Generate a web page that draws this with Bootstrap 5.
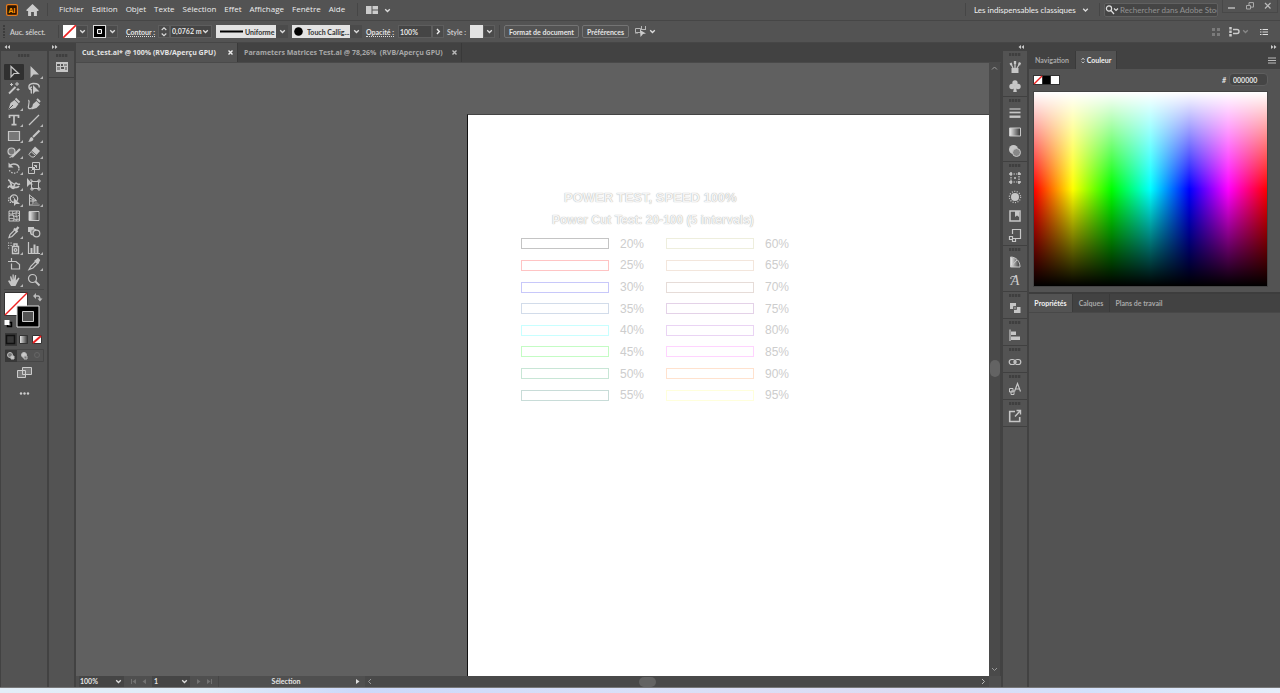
<!DOCTYPE html>
<html lang="fr">
<head>
<meta charset="utf-8">
<meta name="viewport" content="width=device-width, initial-scale=1">
<title>Cut_test.ai</title>
<link href="https://cdn.jsdelivr.net/npm/bootstrap@5.3.0/dist/css/bootstrap.min.css" rel="stylesheet">
<style>
:root{--bg:#535353;--dark:#424242;--line:#464646;--field:#454545;--ink:#e4e4e4;--dim:#a8a8a8;--icon:#c6c6c6;
--chev:url("data:image/svg+xml,%3Csvg xmlns='http://www.w3.org/2000/svg' width='11' height='13' viewBox='0 0 11 13'%3E%3Cpath d='M3.2 5.2 5.5 7.5 7.8 5.2' fill='none' stroke='%23ddd' stroke-width='1.3'/%3E%3C/svg%3E")}
body{font-family:"Open Sans","Noto Sans",sans-serif;font-size:7px;line-height:10px;font-weight:600;color:var(--ink);background:var(--bg)}
button,input,select{font:inherit;color:inherit;border:0;padding:0;margin:0;background:none;border-radius:0}
a{color:inherit;text-decoration:none}
svg{display:block;flex:none}
.ico{width:14px;height:14px;fill:none;stroke:var(--icon);stroke-width:1.2}
.ico .f{fill:var(--icon);stroke:none}
.chv{width:11px;height:13px;fill:none;stroke:#ddd;stroke-width:1.3}
.vsep{width:1px;background:var(--line);align-self:stretch;flex:none}
.ctlbar,.panels,.statusbar{font-family:Lato,"Open Sans",sans-serif;font-weight:700}
.menubar{height:21px;border-bottom:1px solid var(--line);font-size:8px;font-weight:400;color:#eee;padding-left:6px}
.menubar .vsep{margin:3px 0 4px}
.menulist{gap:8px;margin:0 12px 0 11px;padding-bottom:2px}
.pick{appearance:none;background:var(--chev) right center no-repeat}
.workspace{width:117px;font-family:Lato,sans-serif}
.searchbox{width:114px;height:14px;background:var(--field);border:1px solid #606060;border-radius:2px}
.searchbox input{font-family:Lato,sans-serif;font-size:8px;min-width:0;width:100%;outline:0}
.searchbox input::placeholder{color:#929292;opacity:1}
.winbtns{width:56px;height:13px;border:1px solid #484848;border-top:0;align-self:flex-start;margin-right:2px}
.ctlbar{height:22px;padding-left:3px;border-bottom:1px solid var(--line)}
.ctl{height:13px;flex:none}
.drop{width:12px;height:13px;border:1px solid #5e5e5e;background:#4b4b4b}
.drop .chv{margin:-1px 0}
.swatch{width:13px;height:13px;background:#fff;overflow:hidden}
.dotted{border-bottom:1px dotted #ddd;line-height:9px}
.fieldbox{background-color:var(--field);border:1px solid #5e5e5e;height:13px;line-height:11px}
.lightpick{height:13px;line-height:12px;color:#333;background-image:var(--chev),var(--mark),linear-gradient(90deg,#e2e2e2 60px,#4b4b4b 60px);background-repeat:no-repeat;background-position:right center,left center,0 0}
.strokepick{width:72px;padding-left:29px;--mark:url("data:image/svg+xml,%3Csvg xmlns='http://www.w3.org/2000/svg' width='30' height='13'%3E%3Cpath d='M4 6.5h23' stroke='%23000' stroke-width='2'/%3E%3C/svg%3E")}
.brushpick{width:70px;padding-left:15px;background-image:var(--chev),var(--mark),linear-gradient(90deg,#e2e2e2 58px,#4b4b4b 58px);--mark:url("data:image/svg+xml,%3Csvg xmlns='http://www.w3.org/2000/svg' width='15' height='13'%3E%3Ccircle cx='6.5' cy='6.5' r='4.3'/%3E%3C/svg%3E")}
.cbtn{height:13px;border:1px solid #747474;border-radius:2px;line-height:10px;white-space:nowrap;flex:none}
.railhead{height:8px;background:var(--dark);flex:none}
.rail{border-right:2px solid var(--dark);background:var(--bg)}
.grip{width:12px;height:3px;margin:3px auto 0;background:repeating-linear-gradient(90deg,#3f3f3f 0 2px,#4c4c4c 2px 3px)}
.toolgrid{display:grid;grid-template-columns:20px 20px;grid-auto-rows:16px;margin:7px 0 0 3px}
.toolgrid button{position:relative;display:grid;place-items:center}
.toolgrid .on{background:#303030;border-radius:1px}
.more::after{content:"";position:absolute;right:1px;bottom:1px;border-left:3px solid transparent;border-bottom:3px solid #b5b5b5}
.tabstrip{background:var(--dark)}
.doctab{height:19px;padding:0 4px 0 6px;border-right:1px solid #393939;color:var(--dim);font-weight:700}
.doctab.on{background:var(--bg);color:var(--ink)}
.canvas{background:#606060;overflow:hidden;position:relative}
.artboard{position:absolute;left:391px;top:51px;right:0;bottom:0;background:#fff;border-left:1px solid #111;border-top:1px solid #444;font-family:"Liberation Sans",Arial,sans-serif}
.sheet{width:268px;margin:76px 0 0 53px}
.sheet h1,.sheet h2{font-size:12px;line-height:14px;font-weight:700;margin:0 0 8px;white-space:nowrap;color:#f4f4f4;text-shadow:0 0 1px #999}
.sheet h1{margin-left:43px;font-size:13px}.sheet h2{margin-left:31px;margin-bottom:6px}
.swgrid{display:grid;grid-template-columns:88px 57px 88px 35px;grid-template-rows:repeat(8,1fr);height:173px;align-items:center;font-size:12px;line-height:14px;font-weight:400;color:#cdcdcd}
.pct{padding-left:11px}
.bar{height:11px;border:1px solid}
.scrollv{width:12px;background:#4a4a4a;border-right:1px solid var(--dark)}
.thumbv{width:10px;height:17px;border-radius:5px;background:#636363}
.statusbar{height:11px;background:#4f4f4f;padding-left:3px}
.statusbar .pick,.statusbar input{height:11px;line-height:11px;background-color:var(--field)}
.thumbh{width:17px;height:10px;border-radius:5px;background:#636363}
.dock{width:26px;border-left:2px solid var(--dark)}
.dockgroup{border-bottom:1px solid #404040;padding-bottom:1px}
.dockgroup .griprow{height:6px;padding-top:2px}
.dockgroup .grip{margin-top:0}
.dockgroup button{display:grid;place-items:center;width:100%;height:19px}
.panels{width:253px;border-left:2px solid var(--dark)}
.ptabs{height:18px;background:var(--dark)}
.ptabs button{padding:0;color:var(--dim);border-right:1px solid #3a3a3a}
.ptabs .on{background:var(--bg);color:#f2f2f2}
.spectrum{height:196px;margin:5px 12px 5px 4px;border:1px solid #444;background:linear-gradient(#fff,#fff0 50%,#0000 50%,#000),linear-gradient(90deg,#f00,#ff0,#0f0,#0ff,#00f,#f0f,#f00)}
.osbar{height:6px;border-top:1px solid #777;background:linear-gradient(90deg,#e3eef8,#e0ecf8 16%,#ccd9fa 28%,#d9e0f8 50%,#dcdcf3 70%,#d3e1fb 85%,#e6eefa)}
</style>
</head>
<body>
<svg width="0" height="0" class="position-absolute" aria-hidden="true">
<symbol id="chev" viewBox="0 0 11 13"><path d="M3.2 5.2 5.5 7.5 7.8 5.2"/></symbol>
<symbol id="none" viewBox="0 0 13 13"><path fill="#fff" d="M0 0h13v13H0z"/><path d="M0 13 13 0" stroke="#e22" stroke-width="1.6"/></symbol>
</svg>
<div class="d-flex flex-column vh-100 overflow-hidden">

<header class="menubar d-flex align-items-center flex-shrink-0">
  <svg width="12" height="12" viewBox="0 0 12 12"><rect x=".6" y=".6" width="10.8" height="10.8" rx="1.5" fill="#2d1500" stroke="#e87d1c" stroke-width="1.2"/><text x="6" y="8.5" text-anchor="middle" font-size="7" font-weight="700" fill="#ff9a00">Ai</text></svg>
  <button aria-label="Accueil" class="mx-2 px-0"><svg width="13" height="12" viewBox="0 0 12 12"><path fill="#ccc" d="M6 0 0 5.700V7h1.600v5h3V8h2.800v4h3V7H12V5.700z"/></svg></button>
  <span class="vsep"></span>
  <nav class="menulist d-flex"><a href="#">Fichier</a><a href="#">Edition</a><a href="#">Objet</a><a href="#">Texte</a><a href="#">Sélection</a><a href="#">Effet</a><a href="#">Affichage</a><a href="#">Fenêtre</a><a href="#">Aide</a></nav>
  <span class="vsep"></span>
  <button class="d-flex align-items-center ms-2" aria-label="Disposition"><svg width="12" height="8" viewBox="0 0 12 8" fill="#ccc"><path d="M0 0h5.500v8H0zM6.500 0H12v3.500H6.500zM6.500 4.500H12V8H6.500z"/></svg><svg class="chv ms-1"><use href="#chev"/></svg></button>
  <div class="ms-auto d-flex align-items-center align-self-stretch">
    <span class="vsep"></span>
    <select class="pick workspace mx-2" aria-label="Espace de travail"><option>Les indispensables classiques</option></select>
    <span class="vsep"></span>
    <label class="searchbox d-flex align-items-center ms-1 me-1"><svg width="15" height="10" viewBox="0 0 14 10" fill="none" stroke="#ddd" stroke-width="1.200"><circle cx="3.500" cy="3.500" r="2.600"/><path d="m5.500 5.500 3 3.500M8.500 3.500l2 2 2-2"/></svg><input type="text" aria-label="Rechercher" placeholder="Rechercher dans Adobe Stock"></label>
    <div class="winbtns d-flex align-items-center justify-content-around">
      <button aria-label="Réduire"><svg width="8" height="8" viewBox="0 0 8 8"><path d="M0 6h7" stroke="#aaa" stroke-width="1.800"/></svg></button>
      <button aria-label="Restaurer"><svg width="8" height="8" viewBox="0 0 8 8" fill="none" stroke="#aaa"><path d="M.5 3.500h4v3.500h-4zM3 3.500V.6h4.500v4.500h-3"/></svg></button>
      <button aria-label="Fermer"><svg width="8" height="8" viewBox="0 0 8 8"><path d="m1 1 5.500 5.500M6.500 1 1 6.500" stroke="#bbb" stroke-width="1.200"/></svg></button>
    </div>
  </div>
</header>

<div class="ctlbar d-flex align-items-center flex-shrink-0">
  <svg width="2" height="13"><path d="M1 0v13" stroke="#3c3c3c" stroke-width="2" stroke-dasharray="2 1"/></svg>
  <span class="text-nowrap" style="width:53px;padding-left:5px;color:#c9c9c9">Auc. sélect.</span>
  <span class="vsep my-1 me-1"></span>
  <button class="ctl d-flex" aria-label="Fond"><span class="swatch"><svg width="13" height="13"><use href="#none"/></svg></span><span class="drop"><svg class="chv"><use href="#chev"/></svg></span></button>
  <button class="ctl d-flex" aria-label="Couleur de contour" style="margin:0 8px 0 5px"><span class="swatch"><svg width="13" height="13"><path d="M0 0h13v13H0z" fill="#ddd"/><path d="M1 1h11v11H1z"/><path d="M4.500 4.500h4v4h-4z" fill="#333" stroke="#fff"/></svg></span><span class="drop"><svg class="chv"><use href="#chev"/></svg></span></button>
  <label for="sw" class="text-nowrap" style="width:32px"><span class="dotted">Contour :</span></label>
  <button class="drop" aria-label="Incrément"><svg width="10" height="11" viewBox="0 0 10 11" fill="none" stroke="#ddd" stroke-width="1.100"><path d="m2.700 4 2.300-2.200L7.300 4M2.700 7.500 5 9.700l2.300-2.200"/></svg></button>
  <select id="sw" class="pick fieldbox" style="width:42px;padding-left:1px;margin-right:4px"><option>0,0762 m</option></select>
  <select class="pick lightpick strokepick" style="margin-right:4px" aria-label="Profil"><option>Uniforme</option></select>
  <select class="pick lightpick brushpick" style="margin-right:4px" aria-label="Forme"><option>Touch Callig...</option></select>
  <label for="op" class="text-nowrap" style="width:32px"><span class="dotted">Opacité :</span></label>
  <input id="op" class="fieldbox" style="width:34px;padding-left:1px" value="100%">
  <button class="drop" aria-label="Opacité, réglage"><svg width="10" height="11" viewBox="0 0 10 11"><path d="M4 3 6.300 5.500 4 8" fill="none" stroke="#eee" stroke-width="1.400"/></svg></button>
  <span class="text-nowrap" style="width:26px;padding-left:3px;color:#c9c9c9">Style :</span>
  <button class="ctl d-flex" aria-label="Style"><span class="swatch" style="background:#e2e2e2"></span><span class="drop"><svg class="chv"><use href="#chev"/></svg></span></button>
  <span class="vsep my-1 mx-1"></span>
  <button class="cbtn" style="width:75px;margin-right:3px">Format de document</button>
  <button class="cbtn" style="width:47px">Préférences</button>
  <button class="d-flex align-items-center" aria-label="Sélectionner" style="margin-left:6px"><svg width="12" height="11" viewBox="0 0 12 11" fill="none" stroke="#b5b5b5"><path d="M.5 2.500h5v4h-5zM6.500 0v4M10.500 0v4M6.500 3.500h4M0 7h3"/><path d="m5 4 6 3.500L8 8l-2.500 3z" fill="#ccc" stroke="none"/></svg><svg class="chv"><use href="#chev"/></svg></button>
  <div class="ms-auto d-flex align-items-center" style="gap:9px;padding-right:12px">
    <svg width="8" height="8" fill="#7b7b7b"><path d="M0 0h3v3H0zM5 0h3v3H5zM0 5h3v3H0zM5 5h3v3H5z"/></svg>
    <button class="d-flex align-items-center" aria-label="Aligner"><svg width="11" height="10" viewBox="0 0 11 10" fill="none" stroke="#ccc" stroke-width="1.400"><path d="M1.500 0v10" stroke-width="2.500" stroke-dasharray="2.500 1"/><path d="M4 2.500h4a2 2 0 0 1 0 4H4"/></svg><svg class="chv" style="stroke:#888"><use href="#chev"/></svg></button>
    <button aria-label="Options"><svg width="8" height="8" stroke="#ddd"><path d="M2.500 1.500H8M2.500 4H8M2.500 6.500H8M0 1.500h1.500M0 4h1.500M0 6.500h1.500"/></svg></button>
  </div>
</div>

<main class="d-flex flex-grow-1" style="min-height:0">
  <aside class="rail d-flex flex-column flex-shrink-0" style="width:49px;border-left:1px solid #424242">
    <div class="railhead"><svg width="12" height="8" fill="#ccc"><path d="M6 2 3.500 4 6 6zM9 2 6.500 4 9 6z"/></svg></div>
    <div class="grip"></div>
    <div class="toolgrid">
      <button class="on" aria-label="Sélection"><svg class="ico"><path d="M4 1.500v10.500l3-3.500h4.500z"/></svg></button>
      <button class="more" aria-label="Sélection directe"><svg class="ico"><path class="f" d="M3.500 1v12l3-3.500h5.500z"/></svg></button>
      <button aria-label="Baguette magique"><svg class="ico"><path d="M2 12.500 8.500 6" stroke-width="1.800"/><path d="M10 1v4M8 3h4M4.500 2v3M3 3.500h3M11 7v3M9.500 8.500h3" stroke-width="1"/></svg></button>
      <button aria-label="Lasso"><svg class="ico"><path d="M5 9C1 8.500.5 3 6 2.500c5-.3 7 2 6 4M5 9c-2 0-2-3 0-3M4 8.500c0 2 1 3 0 4" stroke-width="1.400"/><path class="f" d="M6 4v9l2.500-2.500h4z"/></svg></button>
      <button class="more" aria-label="Plume"><svg class="ico"><path class="f" d="M1.500 12.500 3.500 6l4-3 4 4-3 4z"/><path d="m8.500 1.500 4 4" stroke-width="2"/><path d="m2 12 4-4" stroke="#535353" stroke-width="1"/></svg></button>
      <button aria-label="Courbure"><svg class="ico"><path class="f" d="M4.500 12.500 6 7l3.500-3 3.500 3.500L9.500 11z"/><path d="m10 2 3 3" stroke-width="2"/><path d="M1.500 3c2 2-1 6 0 8 1 1 3 1 4-1"/></svg></button>
      <button class="more" aria-label="Texte"><svg class="ico"><path d="M2.500 5V2.500h9V5M7 2.500v9M4.500 11.700h5" stroke-width="1.700"/></svg></button>
      <button class="more" aria-label="Trait"><svg class="ico"><path d="M2 12 12 2"/></svg></button>
      <button class="more" aria-label="Rectangle"><svg class="ico"><path d="M1.500 2.500h11v9h-11z" fill="#777"/></svg></button>
      <button class="more" aria-label="Pinceau"><svg class="ico"><path d="m6 8 6.500-6.500" stroke-width="2.200"/><path class="f" d="M1 12.500c2-.5 1-4 4-4.500l1.500 2C6 12.500 3.500 13 1 12.500z"/></svg></button>
      <button class="more" aria-label="Shaper"><svg class="ico"><circle cx="4.500" cy="6.500" r="3.500" fill="#777"/><path d="M5 12 13 4" stroke-width="2.200"/><path d="M2.500 12.500 6 11"/></svg></button>
      <button class="more" aria-label="Gomme"><svg class="ico"><path class="f" d="m8 1.500 5 4.500-3.500 4L4.500 5.500z"/><path d="m4 6.500 4.500 4-1.500 1.500H4.500L2 9.500z" fill="#535353" stroke-width="1"/></svg></button>
      <button class="more" aria-label="Rotation"><svg class="ico"><path d="M3 4.500C6 1.500 12 3 12 7.500" stroke-width="1.500"/><path d="M12 8c-1 6-9 5-10 0" stroke-dasharray="1.500 1.300"/><path class="f" d="M1.500 1.500v5h5z"/></svg></button>
      <button class="more" aria-label="Mise à l'échelle"><svg class="ico"><path d="M5.500 1.500h7v7h-7zM1.500 6.500h6v6h-6zM4.500 9.500l5-5M7 4.500h2.500V7" stroke-width="1"/></svg></button>
      <button class="more" aria-label="Largeur"><svg class="ico"><path d="M1 3c4 0 2 7 5 7 2 0 1-4 3-4 1 0 1 2 4 1M1 11c2-5 4 2 6 0s3 1 5-2" stroke-width="1.700"/><path d="M3 4.500 7 7"/></svg></button>
      <button aria-label="Transformation manuelle"><svg class="ico"><path class="f" d="M0 1v9l2.500-2.500H6z"/><path d="M4.500 4.500h7v7h-7z" stroke-width="1"/><path d="M3 3h2v2M11 3h2v2h-2zM11 11h2v2h-2zM4 11h2v2H4z" stroke-width="1"/></svg></button>
      <button class="more" aria-label="Concepteur de forme"><svg class="ico"><circle cx="7" cy="5.500" r="3.700"/><circle cx="4.500" cy="6.500" r="3" stroke-dasharray="1.500 1"/><path class="f" d="M7 5v8l2-2h4z"/></svg></button>
      <button class="more" aria-label="Grille de perspective"><svg class="ico"><path d="M2.500 1.500v11M2.500 2l7 5.500M2.500 5l7 3M2.500 8h6M2.500 12h10M6 4.500V12" stroke-width="1"/><path d="M9 8l4 4H5z" fill="#777" stroke="none"/></svg></button>
      <button aria-label="Filet"><svg class="ico"><path d="M2 2h10.500v10H2zM2 7c3-3 6 3 10.500-1M6 2c-2 4 3 6 0 10M10 2c-3 5 2 6-1 10M2 4.500c4 2 6-2 10 0M2 10c4-2 6 2 10 0" stroke-width="1"/></svg></button>
      <button aria-label="Dégradé"><svg class="ico"><defs><linearGradient id="lg"><stop stop-color="#eee"/><stop offset="1" stop-color="#333"/></linearGradient></defs><path d="M2 2.500h10v9H2z" fill="url(#lg)" stroke-width="1"/></svg></button>
      <button class="more" aria-label="Pipette"><svg class="ico"><path d="M2 12.500 3 9.500 8 4.500l2 2L5 11.500z"/><path d="M7 3.500 10.500 7M9 5l2.500-3" stroke-width="2.300"/></svg></button>
      <button aria-label="Dégradé de formes"><svg class="ico"><path class="f" d="M1 2h6v5H1z"/><circle cx="6.500" cy="7" r="3" fill="#888"/><circle cx="9.500" cy="8.500" r="3.300" fill="#535353"/></svg></button>
      <button class="more" aria-label="Pulvérisation"><svg class="ico"><path d="M5.500 5.500h6v7h-6zM7 5V3h3v2" stroke-width="1.400"/><circle cx="8.500" cy="9" r="1.300"/><path d="M1 2h1.200M3.500 2h1.200M1 4.500h1.200M3.500 4.500h1.200M1 7h1.200"/></svg></button>
      <button class="more" aria-label="Graphe"><svg class="ico"><path d="M1.500 1v11.500H13"/><path d="M4.500 12V7M7.500 12V3.500M10.500 12V5" stroke-width="2"/></svg></button>
      <button aria-label="Plan de travail"><svg class="ico"><path d="M4.500 1v4M1 4.500h8l3.500 3V12H4.500V6.500"/></svg></button>
      <button class="more" aria-label="Tranche"><svg class="ico"><path d="M2 12.500 4 9l4.500-4.500 2 2L6 11z"/><path d="m8 4 3-2.500 1.500 1.500L11 6z" fill="#c6c6c6"/></svg></button>
      <button class="more" aria-label="Main"><svg class="ico"><path class="f" d="M4 13 1 8l1.200-.7L4 8.500 3 3.500l1.200-.2L5.500 7V1.500h1.300V7l1.200-5 1.200.2L8.800 7.500l2.700-3 1 .7L10 10l-1.500 3z"/></svg></button>
      <button aria-label="Zoom"><svg class="ico"><circle cx="5.500" cy="5.500" r="4"/><path d="m8.500 8.500 4 4" stroke-width="1.800"/></svg></button>
    </div>
    <svg width="44" height="115" viewBox="1 288 44 115" fill="none">
      <path d="M4 289.500h40" stroke="#484848"/>
      <path fill="#fff" stroke="#333" d="M4.500 292.500h23v23h-23z"/><path d="m5 315 22-22" stroke="#e22" stroke-width="1.500"/>
      <path d="M17 306h22v21H17z" fill="#000" stroke="#ddd"/><path d="M22.500 311.500h11v10h-11z" fill="#535353" stroke="#ccc"/>
      <path d="M35 296h3q2 0 2 4" stroke="#bbb" stroke-width="1.300"/><path fill="#bbb" d="m33 296 3-3v6zM37.500 298.500h5l-2.500 3z"/>
      <path d="M7.500 322.500h4v4h-4z" stroke="#000" stroke-width="1.500"/><path fill="#fff" d="M4.500 320h5v5h-5z"/>
      <path fill="#383838" d="M5 333h12v13H5z"/><path d="M6.500 335.500h8v8h-8z" stroke="#111" stroke-width="1.500"/>
      <path fill="url(#lg)" stroke="#333" d="M19.500 335.500h8v8h-8z"/><path fill="#fff" stroke="#333" d="M32.500 335.500h9v8h-9z"/><path d="m33 343 8-7" stroke="#e22" stroke-width="2"/>
      <path stroke="#464646" d="M5.500 349.500h38v12h-38z"/><path fill="#383838" d="M5 350h12v12H5z"/>
      <g stroke="#bbb"><circle cx="10" cy="355" r="2.500" fill="#777"/><path d="M11 356h3v3h-3z" fill="#ccc"/><circle cx="24" cy="355" r="2.500" fill="#ccc"/><path d="M24 356h3v3h-3z" fill="#777"/><circle cx="37" cy="355" r="2.500" stroke="#666"/></g>
      <path d="M17.500 370.500h8v7h-8zM22.500 367.500h9v7h-9z" fill="#777" stroke="#ccc"/>
      <g fill="#ccc"><circle cx="21" cy="393.500" r="1.200"/><circle cx="24.500" cy="393.500" r="1.200"/><circle cx="28" cy="393.500" r="1.200"/></g>
    </svg>
  </aside>
  <aside class="rail flex-shrink-0" style="width:27px">
    <div class="railhead"><svg width="12" height="8" fill="#ccc"><path d="M3 2 5.500 4 3 6zM6 2 8.500 4 6 6z"/></svg></div>
    <div class="grip"></div>
    <button class="d-block w-100" aria-label="Nuancier" style="height:21px;border-bottom:1px solid #404040"><svg class="mx-auto" width="12" height="10" viewBox="0 0 12 10"><path fill="#c6c6c6" d="M0 0h12v10H0z"/><path fill="#555" d="M1 2h3v2H1zM5 5h3v2H5zM5 2h2v2H5z"/><path fill="#888" d="M1 5h3v3H1zM8 2h3v2H8zM9 5h2v3H9z"/></svg></button>
  </aside>

  <section class="d-flex flex-column flex-grow-1" style="min-width:0">
    <div class="tabstrip d-flex flex-shrink-0" style="height:20px;border-bottom:1px solid #4a4a4a">
      <div class="doctab on d-flex align-items-center text-nowrap" style="width:162px">Cut_test.ai* @ 100% (RVB/Aperçu GPU)<button class="ms-auto" aria-label="Fermer l'onglet"><svg width="5" height="5"><path d="m.5.500 4 4m0-4-4 4" stroke="#eee" stroke-width="1.400"/></svg></button></div>
      <div class="doctab d-flex align-items-center text-nowrap" style="width:224px">Parameters Matrices Test.ai @ 78,26%&nbsp; (RVB/Aperçu GPU)<button class="ms-auto" aria-label="Fermer l'onglet"><svg width="5" height="5"><path d="m.5.500 4 4m0-4-4 4" stroke="#bbb" stroke-width="1.400"/></svg></button></div>
    </div>
    <div class="d-flex flex-grow-1" style="min-height:0">
      <div class="canvas flex-grow-1">
        <div class="artboard">
          <div class="sheet">
            <h1>POWER TEST, SPEED 100%</h1>
            <h2>Power Cut Test: 20-100 (5 intervals)</h2>
            <div class="swgrid">
              <span class="bar" style="border-color:#c4c4c4"></span><span class="pct">20%</span><span class="bar" style="border-color:#eeeedd"></span><span class="pct">60%</span>
              <span class="bar" style="border-color:#ffc4c4"></span><span class="pct">25%</span><span class="bar" style="border-color:#f3e6dc"></span><span class="pct">65%</span>
              <span class="bar" style="border-color:#c8c8fa"></span><span class="pct">30%</span><span class="bar" style="border-color:#e6dcd8"></span><span class="pct">70%</span>
              <span class="bar" style="border-color:#d2dcea"></span><span class="pct">35%</span><span class="bar" style="border-color:#e4d2e8"></span><span class="pct">75%</span>
              <span class="bar" style="border-color:#c8ffff"></span><span class="pct">40%</span><span class="bar" style="border-color:#ead4f4"></span><span class="pct">80%</span>
              <span class="bar" style="border-color:#c4fcc4"></span><span class="pct">45%</span><span class="bar" style="border-color:#ffd4ff"></span><span class="pct">85%</span>
              <span class="bar" style="border-color:#c8e6d6"></span><span class="pct">50%</span><span class="bar" style="border-color:#ffe2ce"></span><span class="pct">90%</span>
              <span class="bar" style="border-color:#c8dcd8"></span><span class="pct">55%</span><span class="bar" style="border-color:#ffffdc"></span><span class="pct">95%</span>
            </div>
          </div>
        </div>
      </div>
      <div class="scrollv d-flex flex-column align-items-center flex-shrink-0">
        <svg width="11" height="11" fill="none" stroke="#999"><path d="M3 6.500 5.500 4 8 6.500"/></svg>
        <div class="flex-grow-1"></div><div class="thumbv"></div><div class="flex-grow-1"></div>
        <svg width="11" height="13" fill="none" stroke="#999"><path d="M3 5 5.500 7.500 8 5"/></svg>
      </div>
    </div>
    <div class="statusbar d-flex align-items-center flex-shrink-0">
      <select class="pick" style="width:45px;padding-left:1px" aria-label="Zoom"><option>100%</option></select>
      <svg width="28" height="11" fill="#737373"><path d="M7 3h1v5H7zM12 3v5L8.500 5.500zM22 3v5l-3.500-2.500z"/></svg>
      <select class="pick" style="width:38px;padding-left:2px" aria-label="Plan de travail"><option>1</option></select>
      <svg width="28" height="11" fill="#737373"><path d="M7 3v5l3.500-2.500zM17 3v5l3.500-2.500zM21 3h1v5h-1z"/></svg>
      <span class="vsep"></span>
      <span class="text-center flex-shrink-0" style="width:134px;line-height:11px">Sélection</span>
      <svg width="12" height="11"><path fill="#ddd" d="M3 3v5l3.500-2.500z"/></svg>
      <div class="d-flex align-items-center flex-grow-1" style="background:#494949">
        <svg width="11" height="11" fill="none" stroke="#999"><path d="M6 3 3.500 5.500 6 8"/></svg>
        <div style="flex:262 1 0"></div><div class="thumbh"></div><div style="flex:320 1 0"></div>
        <svg width="11" height="11" fill="none" stroke="#bbb"><path d="m4 3 2.500 2.500L4 8"/></svg>
      </div>
      <div style="width:12px"></div>
    </div>
  </section>

  <aside class="dock flex-shrink-0">
    <div class="railhead"><svg class="ms-auto" width="12" height="8" fill="#ccc"><path d="M6 2 3.500 4 6 6zM9 2 6.500 4 9 6z"/></svg></div>
    <div class="dockgroup"><div class="griprow"><div class="grip"></div></div>
      <button aria-label="Formes"><svg class="ico"><path class="f" d="M3.500 8h7v5h-7z"/><path d="M5 8 3 4M7 8V2M9 8l2.500-4" stroke-width="1.300"/><path d="M7 1v3M2.500 3l1 2M12 2.500 11 5" stroke-width="2.300"/></svg></button>
      <button aria-label="Symboles"><svg class="ico"><g class="f"><circle cx="7" cy="4" r="2.700"/><circle cx="4" cy="7.500" r="2.700"/><circle cx="10" cy="7.500" r="2.700"/><path d="M6.300 6h1.500l1 7H5.200z"/></g></svg></button></div>
    <div class="dockgroup"><div class="griprow"><div class="grip"></div></div>
      <button aria-label="Contour"><svg class="ico"><path d="M1.500 3h11"/><path d="M1.500 6.500h11" stroke-width="1.700"/><path d="M1.500 10.700h11" stroke-width="2.400"/></svg></button>
      <button aria-label="Dégradé"><svg class="ico"><path d="M1.500 3h11v8h-11z" fill="url(#lg)" stroke-width="1"/></svg></button>
      <button aria-label="Transparence"><svg class="ico"><circle class="f" cx="5.500" cy="5.500" r="4.500"/><circle cx="8.500" cy="8.500" r="4" fill="#888" stroke-width="1"/></svg></button></div>
    <div class="dockgroup"><div class="griprow"><div class="grip"></div></div>
      <button aria-label="Transformation"><svg class="ico"><path d="M3 3h8v8H3z" stroke-dasharray="1.500 1"/><path d="M3 1v3M1 3h3M11 1v3M10 3h3M3 10v3M1 11h3M11 10v3M10 11h3" stroke-width="1.500"/><circle class="f" cx="7" cy="7" r="1"/></svg></button>
      <button aria-label="Aspect"><svg class="ico"><circle class="f" cx="7" cy="7" r="4"/><circle cx="7" cy="7" r="5.600" stroke-dasharray="1 1.500"/></svg></button>
      <button aria-label="Styles graphiques"><svg class="ico"><path d="M2 2h10v10H2z" stroke-width="1.500"/><path class="f" d="M7 2h4v6L9 6.500 7 8z"/></svg></button>
      <button aria-label="Exportation"><svg class="ico"><path d="M4.500 6V1.500h8v9H8M1.500 8.500h3v3h-3zM4.500 10.500h3v3h-3z"/></svg></button></div>
    <div class="dockgroup"><div class="griprow"><div class="grip"></div></div>
      <button aria-label="Guide des couleurs"><svg class="ico"><path d="M2.500 2v10H12C12 6 8 2 2.500 2z" fill="url(#lg)" stroke-width="1"/><path d="M2.500 12 9 5" stroke-width="1"/></svg></button>
      <button aria-label="Glyphes"><svg width="14" height="16"><text x="7" y="12" text-anchor="middle" font-family="Liberation Serif, serif" font-style="italic" font-weight="400" font-size="14" fill="#ccc">A</text><path d="M3 6c-1-3 2-3 6-2" fill="none" stroke="#ccc"/></svg></button></div>
    <div class="dockgroup"><div class="griprow"><div class="grip"></div></div>
      <button aria-label="Pathfinder"><svg class="ico"><path class="f" d="M2 2h6v6H2zM6 6h6.500v6H6z"/><path d="M5.500 5.500h3v3h-3z" fill="#888" stroke="#535353" stroke-width=".8"/></svg></button></div>
    <div class="dockgroup"><div class="griprow"><div class="grip"></div></div>
      <button aria-label="Alignement"><svg class="ico"><path d="M2 1.500v11.500"/><path class="f" d="M3 3.500h5V7H3zM3 8.500h9V12H3z"/></svg></button></div>
    <div class="dockgroup"><div class="griprow"><div class="grip"></div></div>
      <button aria-label="Liens"><svg class="ico"><rect x="1.200" y="4.500" width="6" height="5" rx="2.500"/><rect x="6.800" y="4.500" width="6" height="5" rx="2.500"/><path d="M5 7h4"/></svg></button></div>
    <div class="dockgroup"><div class="griprow"><div class="grip"></div></div>
      <button aria-label="Remplacer la police"><svg class="ico"><path d="M1.500 6.500h3.500v3.500H1.500zM3 9h3v3.500H3z" stroke-width="1"/><path d="M6.500 9.500 9.500 1.500l3 8M7.500 7h4"/></svg></button></div>
    <div class="dockgroup"><div class="griprow"><div class="grip"></div></div>
      <button aria-label="Exporter"><svg class="ico"><path d="M7 2.500H1.700v10h10V8" stroke-width="1.600"/><path d="m7 7.500 5-5.500M8.500 1.500h4v4" stroke-width="1.400"/></svg></button></div>
  </aside>

  <aside class="panels d-flex flex-column flex-shrink-0">
    <div class="railhead"><svg class="ms-auto" width="12" height="8" fill="#ccc"><path d="M3 2 5.500 4 3 6zM6 2 8.500 4 6 6z"/></svg></div>
    <div class="ptabs d-flex align-items-stretch flex-shrink-0"><button style="width:47px">Navigation</button><button class="on text-nowrap d-flex align-items-center justify-content-center" style="width:41px;gap:2px"><svg width="4" height="7" fill="none" stroke="#bbb"><path d="m.5 3 1.500-2 1.500 2M.5 4.500 2 6l1.500-1.500"/></svg>Couleur</button>
      <button class="ms-auto border-0 px-1" aria-label="Menu du panneau"><svg width="8" height="7" stroke="#bbb"><path d="M0 1h8M0 3.500h8M0 6h8"/></svg></button></div>
    <div class="d-flex align-items-center" style="padding:4px 12px 0 4px">
      <svg width="27" height="10"><path fill="#333" d="M0 0h27v10H0z"/><path fill="#fff" d="M1 1h8v8H1zM18 1h8v8h-8z"/><path d="m1 9 8-8" stroke="#e22" stroke-width="1.500"/><path d="M10 1h7v8h-7z"/></svg>
      <label for="hex" class="ms-auto fst-italic" style="margin-right:3px">#</label><input id="hex" class="fieldbox rounded-1" style="width:39px;padding-left:3px" value="000000">
    </div>
    <div class="spectrum"></div>
    <div class="ptabs d-flex align-items-stretch flex-shrink-0" style="height:21px;border-top:2px solid #3d3d3d;border-bottom:1px solid #484848"><button class="on" style="width:44px">Propriétés</button><button style="width:37px">Calques</button><button class="border-0" style="width:58px">Plans de travail</button></div>
  </aside>
</main>
<footer class="osbar flex-shrink-0"></footer>
</div>
<script src="https://cdn.jsdelivr.net/npm/bootstrap@5.3.0/dist/js/bootstrap.bundle.min.js"></script>
</body>
</html>
